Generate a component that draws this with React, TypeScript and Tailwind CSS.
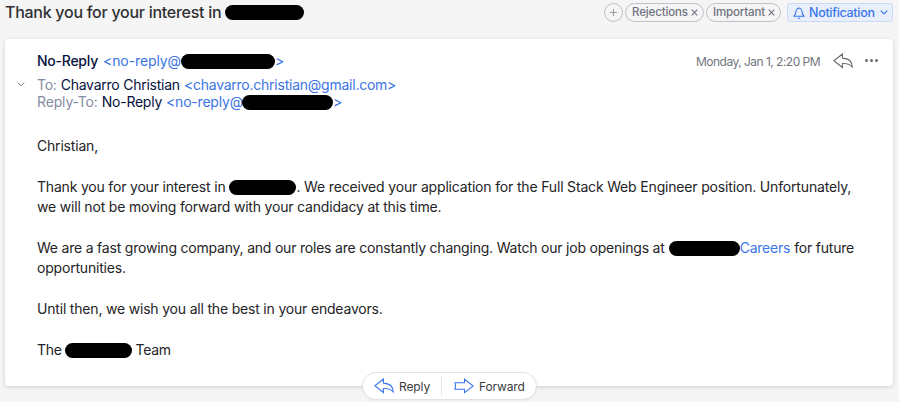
import React from "react";

function Redacted({ className }: { className: string }) {
  return <span className={`inline-block h-[15px] shrink-0 rounded-full bg-black ${className}`} />;
}

function ReplyIcon({ className }: { className: string }) {
  return (
    <svg viewBox="0 0 20 16" className={`h-4 w-5 shrink-0 ${className}`} fill="none" stroke="currentColor" strokeWidth="1.1" strokeLinejoin="miter">
      <path d="M9.400 1 .9 7.800 9.400 14.500V10.600C13.600 10.400 16.800 11 19.200 14 19.200 8.800 15.600 5.400 9.400 5.100Z" />
    </svg>
  );
}

function ForwardIcon() {
  return (
    <svg viewBox="0 0 20 16" className="h-4 w-5 shrink-0 text-[#3b76ea]" fill="none" stroke="currentColor" strokeWidth="1.1">
      <path d="M10.500 1.200 19.200 8 10.500 14.700V11.300H.9C1.600 9.200 1.600 6.800.9 4.700H10.500Z" />
    </svg>
  );
}

function Cross() {
  return (
    <svg viewBox="0 0 7 7" className="ml-auto size-[7px] shrink-0" stroke="currentColor" strokeWidth="1.1">
      <path d="M.7.7 6.3 6.3M6.3.7.7 6.3" />
    </svg>
  );
}

function Tag({ label, className }: { label: string; className: string }) {
  return (
    <span className={`flex h-[19px] items-center rounded-full border border-[#bfc0ca] pl-[6px] pr-[5px] text-[11.5px] font-medium text-[#70737f] ${className}`}>
      <span className="mt-px">{label}</span>
      <Cross />
    </span>
  );
}

export default function App() {
  return (
    <div className="flex h-[402px] w-[899px] flex-col overflow-hidden bg-[#f5f5f6] font-['Inter','Liberation_Sans',sans-serif] text-[14px] text-[#242426]">
      <header className="flex h-[39px] shrink-0 items-start justify-between pl-[5px] pr-[6px] pt-[3px]">
        <h1 className="-mt-px flex h-5 w-[299px] items-center justify-between whitespace-nowrap text-[16px] font-medium text-[#303033]">
          <span className="tracking-[-0.27px]">Thank you for your interest in</span>
          <Redacted className="mt-px w-[79px]" />
        </h1>
        <div className="flex items-center">
          <span className="flex size-[19px] items-center justify-center rounded-full border border-[#bfc0ca] text-[#9a9ca5]">
            <svg viewBox="0 0 9 9" className="size-[9px]" stroke="currentColor">
              <path d="M4.500 1v7M1 4.500h7" />
            </svg>
          </span>
          <Tag label="Rejections" className="ml-[2px] w-[79px] tracking-[-0.13px]" />
          <Tag label="Important" className="ml-[2px] w-[75px] tracking-[-0.15px]" />
          <span className="ml-[6px] flex h-[19px] w-[106px] items-center rounded-[3px] border border-[#c7daf6] bg-[#e8effa] pl-[5px] text-[12.5px] font-medium text-[#3b76ea]">
            <svg viewBox="0 0 12 12" className="mr-1 size-3 shrink-0" fill="none" stroke="currentColor" strokeWidth="1.1" strokeLinejoin="round">
              <path d="M.8 9.300H11.200L9.600 7.200C9 5.800 9.300 4.500 8.700 3.100 8.200 1.900 7.300 1.300 6 1.300S3.800 1.900 3.300 3.100C2.700 4.500 3 5.800 2.400 7.200ZM5 10.800c.5.600 1.500.600 2 0M6 .2v1" />
            </svg>
            <span className="mt-[2px] w-[66px] whitespace-nowrap tracking-[-0.3px]">Notification</span>
            <svg viewBox="0 0 8 5" className="ml-[5px] h-[5px] w-2 shrink-0" fill="none" stroke="currentColor" strokeWidth="1.1">
              <path d="m.8.700 3.200 3.200L7.200.700" />
            </svg>
          </span>
        </div>
      </header>

      <main className="mx-[5px] flex h-[347px] w-[888px] shrink-0 flex-col rounded-[4px] bg-white pl-8 shadow-[0_1px_4px_rgba(0,0,0,0.16)]">
        <div className="flex h-[45px] shrink-0 items-center justify-between pr-[14px]">
          <div className="-mt-[2px] flex items-center whitespace-nowrap text-[#3b74e3]">
            <span className="w-[61px] font-medium tracking-[-0.25px] text-[#06113e]">No-Reply</span>
            <span className="ml-[5px] w-[78px] tracking-[-0.1px]">&lt;no-reply@</span>
            <Redacted className="mt-[2px] w-[94px]" />
            <span>&gt;</span>
          </div>
          <div className="-mt-px flex items-center text-[#686b72]">
            <span className="mt-px text-[12px] tracking-[-0.52px] text-[#737681]">Monday, Jan 1, 2:20 PM</span>
            <ReplyIcon className="ml-[13px]" />
            <span className="-mt-px ml-[12px] mr-px flex gap-[2px]">
              <i className="size-[3px] rounded-full bg-current" />
              <i className="size-[3px] rounded-full bg-current" />
              <i className="size-[3px] rounded-full bg-current" />
            </span>
          </div>
        </div>
        <div className="-mt-[8px] flex h-[17px] shrink-0 items-center whitespace-nowrap tracking-[-0.24px] text-[#3b74e3]">
          <svg viewBox="0 0 8 5" className="-ml-5 mr-3 h-[5px] w-2" fill="none" stroke="#73767f">
            <path d="m.8.700 3.200 3.200L7.200.700" />
          </svg>
          <span className="text-[#858b9f]">To:</span>
          <span className="ml-1 text-[#06113e]">Chavarro Christian</span>
          <span className="ml-1">&lt;chavarro.christian@gmail.com&gt;</span>
        </div>
        <div className="flex h-[17px] shrink-0 items-center whitespace-nowrap text-[#3b74e3]">
          <span className="tracking-[-0.15px] text-[#858b9f]">Reply-To:</span>
          <span className="ml-1 tracking-[-0.25px] text-[#06113e]">No-Reply</span>
          <span className="ml-1 w-[76px] tracking-[-0.2px]">&lt;no-reply@</span>
          <Redacted className="mt-px w-[91px]" />
          <span>&gt;</span>
        </div>
        <article className="mt-[26px] flex flex-col whitespace-nowrap leading-[20.4px] tracking-[-0.19px]">
          <p>Christian,</p>
          <div className="mt-[20.4px]">
            <p className="flex items-center">
              <span>Thank you for your interest in</span>
              <Redacted className="ml-1 w-[67px]" />
              <span className="tracking-[-0.17px]">. We received your application for the Full Stack Web Engineer position. Unfortunately,</span>
            </p>
            <p>we will not be moving forward with your candidacy at this time.</p>
          </div>
          <div className="mt-[20.4px]">
            <p className="flex items-center tracking-[-0.21px]">
              <span>We are a fast growing company, and our roles are constantly changing. Watch our job openings at</span>
              <Redacted className="ml-1 w-[71px]" />
              <span className="text-[#3b76ea]">Careers</span>
              <span className="ml-1">for future</span>
            </p>
            <p>opportunities.</p>
          </div>
          <p className="mt-[20.4px]">Until then, we wish you all the best in your endeavors.</p>
          <p className="mt-[20.4px] flex items-center">
            <span className="tracking-[-0.3px]">The</span>
            <Redacted className="ml-[3px] mr-1 w-[67px]" />
            <span className="tracking-[-0.3px]">Team</span>
          </p>
        </article>
      </main>

      <footer className="relative z-10 -mt-[14px] ml-[362px] flex h-[28px] w-[175px] shrink-0 items-center rounded-full border border-[#e2e2e4] bg-white text-[12px] text-[#3a3a3c] shadow-[0_1px_2px_rgba(0,0,0,0.05)]">
        <div className="flex h-5 w-[79px] items-center border-r border-[#e2e5ea] pl-[11px]">
          <ReplyIcon className="text-[#3b76ea]" />
          <span className="ml-[5px] mt-[2px] tracking-[-0.1px]">Reply</span>
        </div>
        <div className="flex items-center pl-[12px]">
          <ForwardIcon />
          <span className="ml-[5px] mt-[2px] tracking-[-0.15px]">Forward</span>
        </div>
      </footer>
    </div>
  );
}
